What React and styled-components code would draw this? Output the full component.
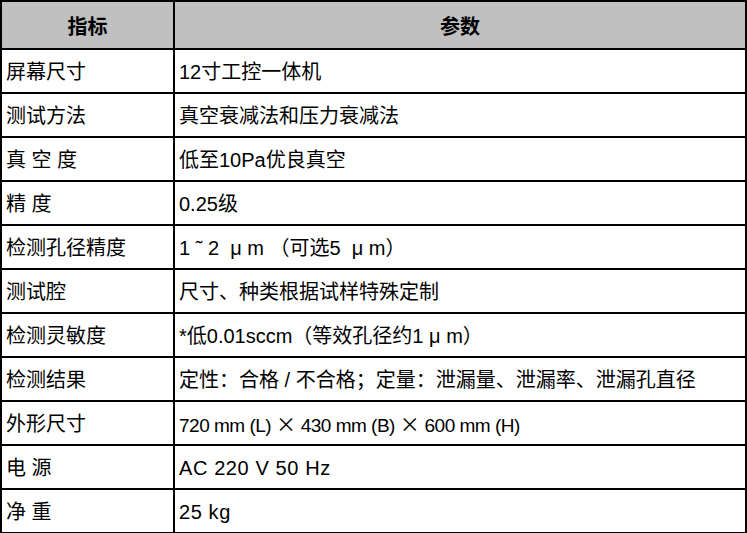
import React from "react";
import styled, { createGlobalStyle } from "styled-components";

const Global = createGlobalStyle`
  html, body { margin: 0; padding: 0; background: #fff; }
  body { font-family: "Liberation Sans", "Noto Sans CJK SC", sans-serif; color: #000; }
`;

const Table = styled.table`
  width: 747px;
  border-collapse: collapse;
  table-layout: fixed;
  border: 2px solid #000;
`;

const HeadRow = styled.tr`
  height: 48px;
  background: #c0c0c0;
`;

const Row = styled.tr`
  height: 44px;
`;

const Th = styled.th`
  border: 2px solid #000;
  font-size: 20px;
  font-weight: 700;
  text-align: center;
  padding: 0;
  width: ${(p) => p.$w || "auto"};
`;

const Td = styled.td`
  border: 2px solid #000;
  font-size: ${(p) => (p.$small ? "19px" : "20px")};
  padding: 2px 0 0 4px;
  white-space: pre;
  letter-spacing: ${(p) => (p.$latin ? "0.6px" : p.$small ? "-0.5px" : "0")};
  line-height: 1;
`;

const Times = styled.span`
  font-family: "Noto Sans CJK SC", sans-serif;
  font-size: 20px;
  letter-spacing: 0;
`;

const rows = [
  ["屏幕尺寸", "12寸工控一体机"],
  ["测试方法", "真空衰减法和压力衰减法"],
  ["真 空 度", "低至10Pa优良真空"],
  ["精 度", "0.25级"],
  ["检测孔径精度", "1 ˜ 2  μ m （可选5  μ m）"],
  ["测试腔", "尺寸、种类根据试样特殊定制"],
  ["检测灵敏度", "*低0.01sccm（等效孔径约1 μ m）"],
  ["检测结果", "定性：合格 / 不合格；定量：泄漏量、泄漏率、泄漏孔直径"],
  [
    "外形尺寸",
    <>
      720 mm (L) <Times>×</Times> 430 mm (B) <Times>×</Times> 600 mm (H)
    </>,
    false,
    true,
  ],
  ["电 源", "AC 220 V 50 Hz", true],
  ["净 重", "25 kg", true],
];

export default function App() {
  return (
    <>
      <Global />
      <Table>
        <thead>
          <HeadRow>
            <Th $w="171px">指标</Th>
            <Th>参数</Th>
          </HeadRow>
        </thead>
        <tbody>
          {rows.map(([k, v, latin, small]) => (
            <Row key={k}>
              <Td>{k}</Td>
              <Td $latin={latin} $small={small}>
                {v}
              </Td>
            </Row>
          ))}
        </tbody>
      </Table>
    </>
  );
}
